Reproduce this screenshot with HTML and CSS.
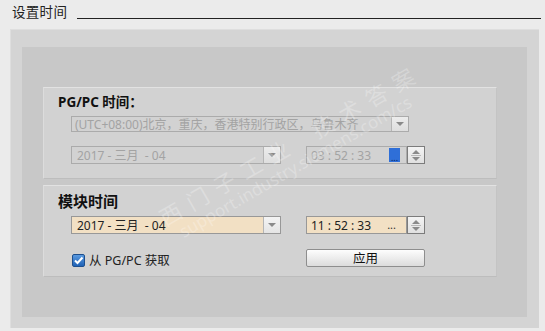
FILE: index.html
```html
<!DOCTYPE html>
<html lang="zh">
<head>
<meta charset="utf-8">
<title>设置时间</title>
<link rel="stylesheet" href="styles.css">
</head>
<body>
<div class="header">
  <span class="title">设置时间</span>
  <span class="rule"></span>
</div>
<div class="outer">
  <div class="inner">
    <div class="group">
      <div class="glabel g1">PG/PC 时间：</div>
      <div class="combo tz disabled">
        <span class="ctext">(UTC+08:00)北京，重庆，香港特别行政区，乌鲁木齐</span>
        <span class="dbtn"><span class="arrow"></span></span>
      </div>
      <div class="row">
        <div class="combo date disabled">
          <span class="ctext">2017 - 三月&nbsp; - 04</span>
          <span class="dbtn"><span class="arrow"></span></span>
        </div>
        <div class="timebox">
          <div class="tfield disabled">
            <span class="ctext">03 : 52 : 33</span>
            <span class="sel">...</span>
          </div>
          <div class="spin"><span class="up"></span><span class="sep"></span><span class="down"></span></div>
        </div>
      </div>
    </div>
    <div class="group g2box">
      <div class="glabel g2">模块时间</div>
      <div class="row first">
        <div class="combo date active">
          <span class="ctext">2017 - 三月&nbsp; - 04</span>
          <span class="dbtn"><span class="arrow"></span></span>
        </div>
        <div class="timebox">
          <div class="tfield active">
            <span class="ctext">11 : 52 : 33</span>
            <span class="dots">...</span>
          </div>
          <div class="spin"><span class="up"></span><span class="sep"></span><span class="down"></span></div>
        </div>
      </div>
      <div class="row bottom">
        <label class="check">
          <span class="box"><svg width="11" height="11" viewBox="0 0 11 11"><path d="M2 5.5 L4.5 8 L9.5 2.5" fill="none" stroke="#fff" stroke-width="2"/></svg></span>
          <span class="ctext">从 PG/PC 获取</span>
        </label>
        <button class="apply">应用</button>
      </div>
    </div>
    <div class="watermark">
      <div class="wm1">西 门 子 工 业&nbsp;&nbsp;&nbsp; 技 术 答 案</div>
      <div class="wm2">support.industry.siemens.com/cs</div>
    </div>
  </div>
</div>
</body>
</html>
```

FILE: styles.css
```css
html, body {
  margin: 0;
  padding: 0;
}
body {
  width: 545px;
  height: 331px;
  overflow: hidden;
  background: #ebebeb;
  font-family: "Noto Sans", "Noto Sans CJK SC", sans-serif;
  color: #1a1a1a;
}
.header {
  display: flex;
  align-items: flex-end;
  height: 20px;
  padding: 3px 4px 0 12px;
  box-sizing: border-box;
}
.title {
  font-family: "Noto Sans CJK SC", sans-serif;
  font-size: 13.5px;
  line-height: 17px;
  color: #222;
  letter-spacing: 0.3px;
}
.rule {
  flex: 1;
  height: 1px;
  background: #222;
  margin-left: 10px;
  margin-bottom: 1px;
}
.outer {
  margin: 9px 0 0 10px;
  width: 529px;
  height: 299px;
  box-sizing: border-box;
  background: #d4d4d4;
  border-top: 1px solid #dedede;
  border-left: 1px solid #dedede;
  padding: 17px 12px 11px 11px;
}
.inner {
  position: relative;
  height: 270px;
  background: #c8c8c8;
  padding: 40px 30px 0 21px;
  box-sizing: border-box;
  overflow: hidden;
}
.group {
  height: 92px;
  box-sizing: border-box;
  background: #d2d2d2;
  border-top: 1px solid #e2e2e2;
  border-left: 1px solid #dcdcdc;
  border-bottom: 1px solid #bdbdbd;
  border-right: 1px solid #c4c4c4;
  padding: 3px 0 0 27px;
}
.g2box {
  margin-top: 6px;
}
.glabel {
  margin-left: -13px;
  font-weight: bold;
  color: #111;
}
.g1 {
  font-size: 13.5px;
  line-height: 20px;
  height: 20px;
  margin-top: 1px;
}
.g2 {
  font-size: 15px;
  line-height: 22px;
  height: 22px;
  margin-top: 1px;
}
.combo, .tfield {
  position: relative;
  display: flex;
  align-items: center;
  box-sizing: border-box;
  border: 1px solid #a5a5a5;
  font-size: 12px;
}
.ctext {
  white-space: nowrap;
}
.combo .ctext {
  flex: 1;
  padding-left: 3px;
}
.disabled {
  background: #d2d2d2;
  color: #a3a3a3;
  border-color: #ababab;
}
.active {
  background: #f2e0c4;
  color: #222;
  border-color: #989898;
}
.tz {
  width: 338px;
  height: 16px;
  margin-top: 4px;
}
.dbtn {
  align-self: stretch;
  width: 17px;
  box-sizing: border-box;
  background: linear-gradient(#f4f4f4, #e4e4e4);
  border-left: 1px solid #b5b5b5;
  display: flex;
  align-items: center;
  justify-content: center;
}
.disabled .dbtn {
  background: linear-gradient(#ececec, #dedede);
}
.arrow {
  width: 0;
  height: 0;
  border-left: 4px solid transparent;
  border-right: 4px solid transparent;
  border-top: 4px solid #8a8a8a;
}
.row {
  display: flex;
  align-items: center;
  height: 18px;
  margin-top: 14px;
}
.row.first {
  margin-top: 4px;
}
.row.bottom {
  margin-top: 15px;
}
.date {
  width: 210px;
  height: 18px;
}
.date .ctext {
  padding-left: 5px;
}
.timebox {
  display: flex;
  height: 18px;
  margin-left: 25px;
}
.tfield {
  width: 101px;
  height: 18px;
  padding-left: 4px;
}
.tfield .ctext {
  flex: 1;
}
.sel {
  width: 11px;
  height: 14px;
  margin-right: 6px;
  background: #2f6fd8;
  color: #0a2050;
  font-size: 9px;
  line-height: 9px;
  display: flex;
  align-items: flex-end;
  justify-content: center;
}
.dots {
  margin-right: 10px;
  font-size: 11px;
  line-height: 14px;
  color: #333;
}
.spin {
  width: 18px;
  height: 18px;
  box-sizing: border-box;
  border: 1px solid #7c7c7c;
  background: linear-gradient(#f4f4f4, #e0e0e0);
  display: flex;
  flex-direction: column;
  align-items: center;
  justify-content: center;
  gap: 1px;
}
.up {
  width: 0;
  height: 0;
  border-left: 4px solid transparent;
  border-right: 4px solid transparent;
  border-bottom: 4px solid #8a8a8a;
}
.down {
  width: 0;
  height: 0;
  border-left: 4px solid transparent;
  border-right: 4px solid transparent;
  border-top: 4px solid #8a8a8a;
}
.sep {
  width: 10px;
  height: 1px;
  background: #b8b8b8;
}
.check {
  display: flex;
  align-items: center;
  width: 235px;
  font-size: 12.5px;
  color: #222;
}
.box {
  width: 13px;
  height: 13px;
  box-sizing: border-box;
  margin-left: 1px;
  margin-top: 4px;
  margin-right: 4px;
  border: 1px solid #1d4f8e;
  border-radius: 2px;
  background: linear-gradient(#5a9ae0, #1f62b6);
  display: flex;
  align-items: center;
  justify-content: center;
}
.box svg {
  display: block;
}
.check .ctext {
  margin-top: 2px;
}
.apply {
  width: 119px;
  height: 18px;
  box-sizing: border-box;
  margin: 0;
  padding: 0;
  border: 1px solid #8e8e8e;
  border-radius: 2px;
  background: linear-gradient(#fdfdfd, #e9e9e9 60%, #dcdcdc);
  font-family: "Noto Sans CJK SC", sans-serif;
  font-size: 12.5px;
  line-height: 16px;
  color: #111;
}
.watermark {
  position: absolute;
  left: 132px;
  top: 160px;
  transform: rotate(-30deg);
  transform-origin: 0 0;
  color: rgba(255, 255, 255, 0.26);
  pointer-events: none;
  white-space: nowrap;
}
.wm1 {
  font-family: "Noto Sans CJK SC", sans-serif;
  font-size: 22px;
  line-height: 26px;
  letter-spacing: 2px;
}
.wm2 {
  font-family: "Noto Sans", sans-serif;
  font-size: 17px;
  line-height: 20px;
  margin-left: 10px;
}
```
